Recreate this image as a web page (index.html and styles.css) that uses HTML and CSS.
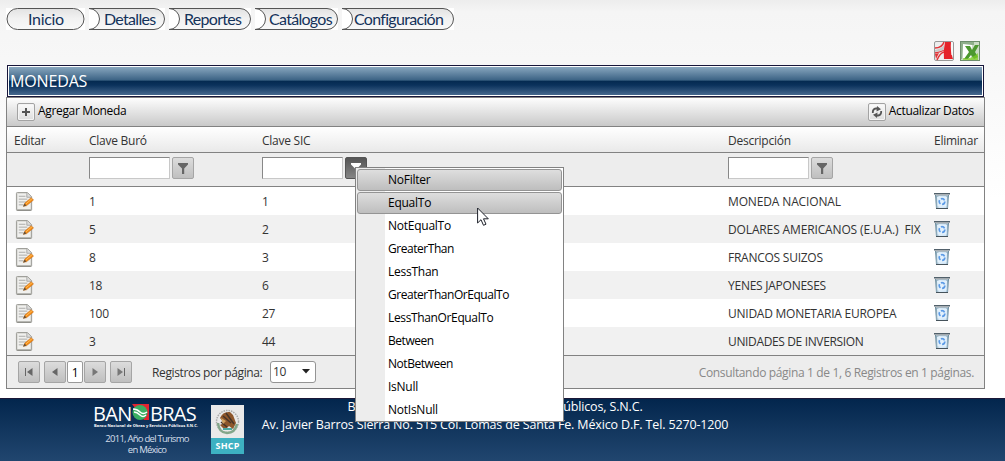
FILE: index.html
```html
<!DOCTYPE html>
<html lang="es">
<head>
<meta charset="utf-8">
<title>Monedas</title>
<link rel="stylesheet" href="styles.css">
</head>
<body>
<svg class="defs" width="0" height="0">
  <defs>
    <linearGradient id="navFill" x1="0" y1="0" x2="0" y2="1"><stop offset="0" stop-color="#e2e2e2"/><stop offset=".5" stop-color="#f2f2f2"/><stop offset="1" stop-color="#f8f8f8"/></linearGradient>
    <linearGradient id="binFill"><stop offset="0" stop-color="#5e8295"/><stop offset=".3" stop-color="#dcecf8"/><stop offset=".75" stop-color="#cfe4f5"/><stop offset="1" stop-color="#5a7f94"/></linearGradient>
    <symbol id="edit" viewBox="0 0 20 20">
      <path d="M1.500 1.500Q1.500.5 2.500.5H13L17.500 5V18.500Q17.500 19.500 16.500 19.500H2.500Q1.500 19.500 1.500 18.500Z" fill="#dcdcd8" stroke="#999994"/>
      <path d="M3 2H12V6H16V18H3Z" fill="#f0f0ee"/>
      <path d="M12.500 1V5.500H17" fill="#ddd" stroke="#aaa"/>
      <path d="M4 4.500H11M4 7.500H13M4 10.500H12M4 13.500H9" stroke="#a9a9a6"/>
      <path d="M2 19H17" stroke="#85857f"/>
      <path d="M9 15L10.500 11.500L17 6L19.500 8.500L12 14.500Z" fill="#f38b17" stroke="#c86c15" stroke-width=".6"/>
      <path d="M11.500 12.500L18 7" stroke="#ffc05b"/>
      <path d="M8.500 15.500L10 12L12 14.300Z" fill="#65513a"/>
    </symbol>
    <symbol id="bin" viewBox="0 0 16 16">
      <path d="M1 2H15L14 15.500H2Z" fill="url(#binFill)"/>
      <path d="M0 0H16V1.500H0Z" fill="#52616b"/>
      <path d="M2 2.500H14" stroke="#a9b9c3"/>
      <path d="M3 4H13L12.500 13.500H3.500Z" fill="#e3f1fc"/>
      <path d="M2 15.500H14" stroke="#46535b"/>
      <circle cx="8" cy="8.500" r="2.800" fill="none" stroke="#5b9ae6" stroke-width="1.700" stroke-dasharray="4.200 1.660"/>
    </symbol>
    <symbol id="funnel" viewBox="0 0 10 11"><path d="M0 0H10V1.500L6.200 5.500V11H4V5.500L0 1.500Z" fill="currentColor"/></symbol>
  </defs>
</svg>

<nav class="nav">
  <a class="tab t1"><svg viewBox="0 0 78 22"><path d="M11 .5H67A10.500 10.500 0 0 1 67 21.500H11A10.500 10.500 0 0 1 11 .5Z"/></svg><span>Inicio</span></a>
  <a class="tab t2"><svg viewBox="0 0 76 22"><path d="M0 .5A10.500 10.500 0 0 1 0 21.500H65A10.500 10.500 0 0 0 65 .5Z"/></svg><span>Detalles</span></a>
  <a class="tab t3"><svg viewBox="0 0 82 22"><path d="M0 .5A10.500 10.500 0 0 1 0 21.500H71A10.500 10.500 0 0 0 71 .5Z"/></svg><span>Reportes</span></a>
  <a class="tab t4"><svg viewBox="0 0 83 22"><path d="M0 .5A10.500 10.500 0 0 1 0 21.500H72A10.500 10.500 0 0 0 72 .5Z"/></svg><span>Catálogos</span></a>
  <a class="tab t5"><svg viewBox="0 0 112 22"><path d="M0 .5A10.500 10.500 0 0 1 0 21.500H101A10.500 10.500 0 0 0 101 .5Z"/></svg><span>Configuración</span></a>
</nav>

<div class="exports">
  <svg width="20" height="20" viewBox="0 0 20 20"><rect x=".5" y=".5" width="19" height="19" rx="1.500" fill="#eee" stroke="#999"/><path d="M11 1H17Q16 10 19 18H10Q9 10 11 1Z" fill="#e52329"/><path d="M1 7Q8 7 10 1M1 12Q7 11 10 9M3 19Q6 12 10 11" fill="none" stroke="#e23438" stroke-width="1.500"/><path d="M1 9Q7 8 10 4V9L1 11Z" fill="#c9c9c9"/><path d="M18 1V14" stroke="#fff"/><path d="M1 13L5 12L2 18Z" fill="#df3337"/></svg>
  <svg width="20" height="20" viewBox="0 0 20 20"><rect x=".5" y=".5" width="19" height="19" fill="#cbdcc5" stroke="#6d8e6c"/><path d="M1 1H14V4H3L2 18H1Z" fill="#8fb08b"/><path d="M3 3L12 4L11 18L3 19Z" fill="#fff"/><path d="M5 5H10L12 9L15 4H19L15 11L18 16L14 18L11 14L8 18H4L9 11Z" fill="#4c982f"/><path d="M3 17Q11 19 18 12V19H3Z" fill="#7ccc23" opacity=".75"/></svg>
</div>

<main>
  <h1 class="title">MONEDAS</h1>
  <section class="grid">
    <div class="toolbar">
      <a class="cmd add"><i class="sq"><svg width="10" height="10" viewBox="0 0 10 10"><path d="M5 1V9M1 5H9" stroke="#555" stroke-width="2"/></svg></i><span>Agregar Moneda</span></a>
      <a class="cmd refresh"><i class="sq"><svg width="12" height="12" viewBox="0 0 12 12"><path d="M1.800 7Q1.500 3 5 2.500H7M10.200 5Q10.500 9 7 9.500H5" fill="none" stroke="#555" stroke-width="1.800"/><path d="M6 0L10 3.200L5.500 5.500ZM6 12L2 8.800L6.500 6.500Z" fill="#555"/></svg></i><span>Actualizar Datos</span></a>
    </div>
    <div class="row head"><div>Editar</div><div>Clave Buró</div><div>Clave SIC</div><div>Descripción</div><div>Eliminar</div></div>
    <div class="row filter">
      <div></div>
      <div><input type="text"><button><svg width="10" height="11"><use href="#funnel"/></svg></button></div>
      <div class="open"><input type="text"><button class="on"><svg width="10" height="11"><use href="#funnel"/></svg></button>
        <ul class="menu">
          <li class="hot">NoFilter</li><li class="hot">EqualTo</li><li>NotEqualTo</li><li class="tight">GreaterThan</li><li>LessThan</li><li class="tight">GreaterThanOrEqualTo</li><li class="snug">LessThanOrEqualTo</li><li class="tight">Between</li><li class="tight">NotBetween</li><li>IsNull</li><li>NotIsNull</li>
        </ul>
        <svg class="cursor" width="12" height="20" viewBox="0 0 12 20"><path d="M.6 1V16L4 12.700L6.500 18.300L9 17.200L6.500 11.800H11.300Z" fill="#fff" stroke="#1d2029"/></svg>
      </div>
      <div><input type="text"><button><svg width="10" height="11"><use href="#funnel"/></svg></button></div>
      <div></div>
    </div>
    <div class="row data"><div><svg class="ed"><use href="#edit"/></svg></div><div>1</div><div>1</div><div class="loose">MONEDA NACIONAL</div><div><svg class="bn"><use href="#bin"/></svg></div></div>
    <div class="row data"><div><svg class="ed"><use href="#edit"/></svg></div><div>5</div><div>2</div><div class="loose">DOLARES AMERICANOS (E.U.A.)&nbsp; FIX</div><div><svg class="bn"><use href="#bin"/></svg></div></div>
    <div class="row data"><div><svg class="ed"><use href="#edit"/></svg></div><div>8</div><div>3</div><div>FRANCOS SUIZOS</div><div><svg class="bn"><use href="#bin"/></svg></div></div>
    <div class="row data"><div><svg class="ed"><use href="#edit"/></svg></div><div>18</div><div>6</div><div>YENES JAPONESES</div><div><svg class="bn"><use href="#bin"/></svg></div></div>
    <div class="row data"><div><svg class="ed"><use href="#edit"/></svg></div><div>100</div><div>27</div><div>UNIDAD MONETARIA EUROPEA</div><div><svg class="bn"><use href="#bin"/></svg></div></div>
    <div class="row data"><div><svg class="ed"><use href="#edit"/></svg></div><div>3</div><div>44</div><div class="snug">UNIDADES DE INVERSION</div><div><svg class="bn"><use href="#bin"/></svg></div></div>
    <div class="pager">
      <button><svg width="8" height="8"><path d="M.5 0V8" stroke="#666"/><path d="M7.500 0V8L2 4Z" fill="#666"/></svg></button>
      <button class="prev"><svg width="8" height="8"><path d="M6.500 0V8L1 4Z" fill="#666"/></svg></button>
      <span class="current">1</span>
      <button class="next"><svg width="8" height="8"><path d="M1.500 0V8L7 4Z" fill="#777"/></svg></button>
      <button class="last"><svg width="8" height="8"><path d="M7.500 0V8" stroke="#666"/><path d="M.5 0V8L6 4Z" fill="#777"/></svg></button>
      <span class="size-label snug">Registros por página:</span>
      <span class="combo"><span>10</span><svg width="8" height="5"><path d="M0 0H8L4 4.500Z" fill="#222"/></svg></span>
      <span class="info">Consultando página 1 de 1, 6 Registros en 1 páginas.</span>
    </div>
  </section>
</main>

<footer>
  <div class="bank">
    <div class="brand"><span class="ban">BAN</span><svg width="17" height="16" viewBox="0 0 17 16"><path d="M0 0H17V16H12Z" fill="#e32431"/><circle cx="8" cy="8.500" r="7.500" fill="#3aae62"/><path d="M1 5Q5 5 8 8T15 8M2 8Q5 8 8 11T14 11" fill="none" stroke="#fff" stroke-width="1.500"/></svg><span class="bras">BRAS</span></div>
    <div class="sub">Banco Nacional de Obras y Servicios Públicos S.N.C.</div>
    <div class="year">2011, Año del Turismo<br>en México</div>
  </div>
  <div class="shcp">
    <svg width="33" height="33" viewBox="0 0 33 33"><circle cx="16.500" cy="16.500" r="11" fill="none" stroke="#aaa" stroke-width="1.500" stroke-dasharray="1.500 1"/><path d="M7 18Q8 28 16 28T26 19" fill="none" stroke="#83a68a" stroke-width="2.500"/><path d="M9 13Q12 6 19 7L22 10L25 18L22 24L18 21L14 25L9 20L13 18Z" fill="#8e572c"/><path d="M12 11L20 18M15 8L23 19M10 17L16 22" stroke="#46352a" stroke-width="1.500"/><path d="M10 13L15 16L12 19Z" fill="#d2a260"/><path d="M12 24H21" stroke="#4ba7a0" stroke-width="2"/></svg>
    <b>SHCP</b>
  </div>
  <div class="address"><div>Banco Nacional de Obras y Servicios Públicos, S.N.C.</div><div>Av. Javier Barros Sierra No. 515 Col. Lomas de Santa Fe. México D.F. Tel. 5270-1200</div></div>
</footer>
</body>
</html>
```

FILE: styles.css
```css
* { box-sizing: border-box; }
body {
  margin: 0;
  width: 1005px;
  height: 461px;
  overflow: hidden;
  display: flex;
  flex-direction: column;
  font: 12px/16px "Open Sans", "Noto Sans", sans-serif;
  letter-spacing: -0.25px;
  color: #333;
  background: linear-gradient(#ededed 0, #f5f5f5 12px, #f7f7f7 60px, #fff 200px);
}
.defs { position: absolute; }
svg { display: block; flex: none; }
.snug { letter-spacing: -0.36px; }
.tight { letter-spacing: -0.46px; }
.loose { letter-spacing: -0.14px; }

.nav { display: flex; gap: 4px; padding: 8px 0 0 6px; height: 30px; }
.tab { display: grid; height: 22px; background: #fff; color: #14325a; font: 16px/22px "Lato", sans-serif; letter-spacing: -0.7px; white-space: nowrap; }
.tab > * { grid-area: 1 / 1; }
.tab svg { width: 100%; height: 22px; }
.tab path { fill: url(#navFill); stroke: #555; }
.tab span { padding-left: 15px; }
.t1 { width: 79px; letter-spacing: -0.3px; }
.t1 span { padding-left: 22px; }
.t2 { width: 76px; }
.t3 { width: 82px; }
.t4 { width: 83px; }
.t4 span { padding-left: 14px; }
.t5 { width: 112px; }
.t5 span { padding-left: 12px; }

.exports { display: flex; justify-content: flex-end; gap: 6px; padding: 11px 25px 4px 0; }

main { padding: 0 20px 9px 6px; }
.title {
  margin: 0 1px;
  height: 32px;
  padding: 0 2px;
  border: 1px solid #17163a;
  box-shadow: inset 0 0 0 1px #fff;
  background: linear-gradient(#8eacc3, #3a6183 48%, #03294f 49%, #0b325c 64%, #4b6d92);
  color: #fff;
  font: 16px/31px "Open Sans", sans-serif;
  letter-spacing: -0.15px;
}
.grid { border: 1px solid #828282; background: #fff; }
.toolbar { display: flex; justify-content: space-between; height: 29px; padding: 5px 10px 0 10px; border-bottom: 1px solid #828282; background: linear-gradient(#fdfdfd, #c9c9c9); color: #000; }
.cmd { display: flex; gap: 3px; line-height: 18px; letter-spacing: -0.34px; }
.cmd span { margin-top: -1px; }
.sq { display: grid; place-items: center; width: 18px; height: 18px; border: 1px solid #a3a3a3; border-radius: 2px; background: linear-gradient(#fbfbfb, #dedede); box-shadow: inset 0 0 0 1px #f4f4f4; }

.row { display: grid; grid-template-columns: 75px 173px 466px 206px 1fr; align-items: center; }
.row > div { padding-left: 7px; white-space: nowrap; }
.head { height: 26px; border-bottom: 1px solid #828282; background: linear-gradient(#fff, #e9e9e9); padding-top: 3px; }
.filter { height: 34px; border-bottom: 1px solid #828282; background: #ededed; }
.filter > div { display: flex; gap: 2px; height: 25px; }
input { width: 81px; height: 22px; padding: 0; border: 1px solid #c8c8c8; border-top-color: #888; border-left-color: #888; background: #fff; }
button { display: grid; place-items: center; flex: none; width: 22px; height: 22px; padding: 0; border: 1px solid #a5a5a5; border-radius: 2px; background: linear-gradient(#dcdcdc, #bfbfbf); color: #666; }
button.on { border-color: #555; background: linear-gradient(#555, #858585); color: #fff; }
.data { height: 28px; padding-top: 2px; }
.data:nth-child(even) { background: #fff; }
.data:nth-child(odd) { background: #f1f1f1; }
.ed { width: 19px; height: 19px; margin: -2px 0 0 1px; }
.bn { width: 16px; height: 16px; margin-top: -2px; }

.open { position: relative; }
.menu { position: absolute; z-index: 2; left: 100px; top: 10px; width: 209px; height: 255px; margin: 0; padding: 1px; list-style: none; border: 1px solid #828282; background: linear-gradient(90deg, #ededed 29px, #fff 29px); color: #000; }
.menu li { height: 22px; margin-bottom: 1px; padding-left: 30px; line-height: 20px; border: 1px solid transparent; border-radius: 3px; }
.menu .hot { border-color: #949494; background: linear-gradient(#dedede, #bebebe); }
.cursor { position: absolute; z-index: 3; left: 222px; top: 50px; }

.pager { display: flex; align-items: center; height: 33px; padding: 0 10px 1px 11px; border-top: 1px solid #828282; background: #ededed; }
.prev { margin-left: 4px; }
.current { width: 16px; height: 22px; margin: 0 1px; border: 1px solid #999; border-radius: 2px; background: #fff; color: #000; line-height: 22px; text-align: center; }
.last { margin-left: 4px; }
.size-label { width: 118px; margin: 2px 0 0 20px; white-space: nowrap; }
.combo { display: flex; align-items: center; justify-content: space-between; width: 46px; height: 22px; padding: 0 5px 0 2px; border: 1px solid #949494; border-radius: 3px; background: #fff; }
.combo span { margin-top: 1px; }
.info { margin: 2px 0 0 auto; color: #888; letter-spacing: -0.35px; }

footer { display: flex; height: 63px; padding-left: 94px; border-top: 1px solid #1b1838; background: linear-gradient(#03264d, #21466f); color: #fff; }
.bank { width: 106px; padding-top: 5px; }
.brand { display: flex; height: 17px; font: 20px/19px "Open Sans", sans-serif; letter-spacing: -0.7px; }
.ban { width: 39px; margin-left: -1px; }
.bras { width: 50px; margin-left: 1px; }
.sub { height: 11px; margin-top: 1px; font: bold 4px/7px "Open Sans", sans-serif; letter-spacing: .04px; white-space: nowrap; }
.year { font: 9.500px/11px "Open Sans", sans-serif; letter-spacing: -0.75px; text-align: center; color: #d5dfea; }
.shcp { width: 33px; height: 49px; margin: 6px 0 0 11px; background: #e9e9e9; }
.shcp b { display: block; height: 16px; background: #3db1c2; font: bold 9px/16px "Open Sans", sans-serif; text-align: center; letter-spacing: .2px; }
.address { width: 468px; margin: -1px 0 0 17px; text-align: center; white-space: nowrap; font-size: 12.500px; letter-spacing: -0.15px; line-height: 18px; }
```
